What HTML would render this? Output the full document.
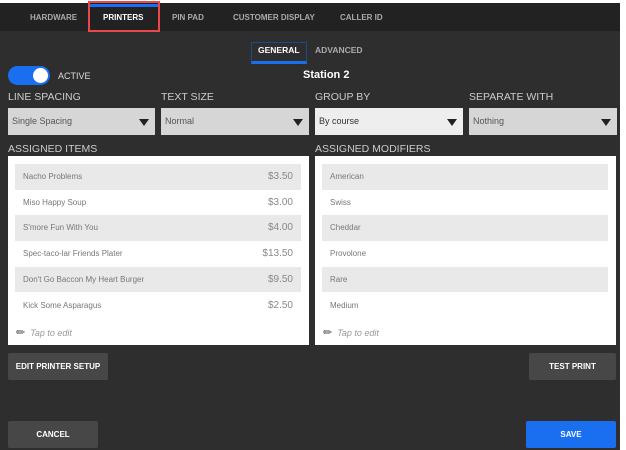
<!DOCTYPE html>
<html><head><style>
*{box-sizing:border-box;margin:0;padding:0}
body{width:626px;height:450px;background:#fff;font-family:"Liberation Sans",sans-serif;position:relative;overflow:hidden}
#app{position:absolute;left:0;top:3px;width:620px;height:447px;background:#2e2e2e}
#bar{position:absolute;left:0;top:0;width:620px;height:28px;background:#222}
.t{position:absolute;top:10px;font-size:8px;font-weight:bold;color:#aaa}
.abs{position:absolute}
.lbl{position:absolute;top:88px;font-size:10.5px;color:#ccc}
.sel{position:absolute;top:105px;height:27px;background:#d6d6d6;font-size:9px;color:#555;padding:8px 0 0 4px}
.sel:after{content:"";position:absolute;right:6px;top:11px;border-left:5px solid transparent;border-right:5px solid transparent;border-top:7px solid #222}
.box{position:absolute;top:153px;width:301px;height:189px;background:#fff}
.row{position:absolute;left:7px;width:286px;height:25.7px;font-size:8px;color:#777;padding:8px 0 0 8px}
.row.g{background:#e9e9e9}
.row span{position:absolute;right:8px;top:7px;font-size:10px;color:#888}
.tap{position:absolute;left:8px;top:170px;font-size:9px;color:#999;font-style:italic}
.tap b{font-style:normal;color:#555;font-size:11px;font-weight:normal}
.btn{position:absolute;background:#474747;color:#fff;font-size:8px;font-weight:bold;text-align:center;border-radius:2px}
</style></head><body>
<div id="app">
<div id="bar"></div>
<div class="abs" style="left:90px;top:1px;width:68px;height:3px;background:#1a6ff0"></div>
<div class="abs" style="left:88px;top:-2px;width:72px;height:31px;border:2px solid #e8484a"></div>
<div class="t" style="left:30px">HARDWARE</div>
<div class="t" style="left:103px;color:#fff">PRINTERS</div>
<div class="t" style="left:172px">PIN PAD</div>
<div class="t" style="left:233px">CUSTOMER DISPLAY</div>
<div class="t" style="left:340px">CALLER ID</div>
<div class="abs" style="left:251px;top:39px;width:56px;height:22px;border:1px solid #1d4a8a;border-bottom:3px solid #1a6ff0"></div>
<div class="abs" style="left:258px;top:42px;font-size:8.5px;font-weight:bold;color:#fff">GENERAL</div>
<div class="abs" style="left:315px;top:42px;font-size:8.5px;font-weight:bold;color:#aaa">ADVANCED</div>
<div class="abs" style="left:8px;top:63px;width:42px;height:19px;border-radius:10px;background:#1a6ff0"></div>
<div class="abs" style="left:33px;top:65px;width:15px;height:15px;border-radius:50%;background:#fff"></div>
<div class="abs" style="left:58px;top:68px;font-size:9px;color:#ddd">ACTIVE</div>
<div class="abs" style="left:303px;top:66px;font-size:11px;font-weight:bold;color:#fff">Station 2</div>
<div class="lbl" style="left:8px">LINE SPACING</div>
<div class="lbl" style="left:161px">TEXT SIZE</div>
<div class="lbl" style="left:315px">GROUP BY</div>
<div class="lbl" style="left:469px">SEPARATE WITH</div>
<div class="sel" style="left:8px;width:147px">Single Spacing</div>
<div class="sel" style="left:161px;width:148px">Normal</div>
<div class="sel" style="left:315px;width:148px;background:#eee;color:#333">By course</div>
<div class="sel" style="left:469px;width:148px">Nothing</div>
<div class="lbl" style="left:8px;top:140px">ASSIGNED ITEMS</div>
<div class="lbl" style="left:315px;top:140px">ASSIGNED MODIFIERS</div>
<div class="box" style="left:8px">
<div class="row g" style="top:8px">Nacho Problems<span>$3.50</span></div>
<div class="row" style="top:33.7px">Miso Happy Soup<span>$3.00</span></div>
<div class="row g" style="top:59.4px">S'more Fun With You<span>$4.00</span></div>
<div class="row" style="top:85.1px">Spec-taco-lar Friends Plater<span>$13.50</span></div>
<div class="row g" style="top:110.8px">Don't Go Baccon My Heart Burger<span>$9.50</span></div>
<div class="row" style="top:136.5px">Kick Some Asparagus<span>$2.50</span></div>
<div class="tap"><b>&#9999;</b>&nbsp; Tap to edit</div>
</div>
<div class="box" style="left:315px">
<div class="row g" style="top:8px">American</div>
<div class="row" style="top:33.7px">Swiss</div>
<div class="row g" style="top:59.4px">Cheddar</div>
<div class="row" style="top:85.1px">Provolone</div>
<div class="row g" style="top:110.8px">Rare</div>
<div class="row" style="top:136.5px">Medium</div>
<div class="tap"><b>&#9999;</b>&nbsp; Tap to edit</div>
</div>
<div class="btn" style="left:8px;top:350px;width:100px;height:27px;line-height:27px">EDIT PRINTER SETUP</div>
<div class="btn" style="left:529px;top:350px;width:87px;height:27px;line-height:27px">TEST PRINT</div>
<div class="btn" style="left:8px;top:418px;width:90px;height:27px;line-height:27px">CANCEL</div>
<div class="btn" style="left:526px;top:418px;width:90px;height:27px;line-height:27px;background:#1a6ff0">SAVE</div>
</div>
</body></html>
